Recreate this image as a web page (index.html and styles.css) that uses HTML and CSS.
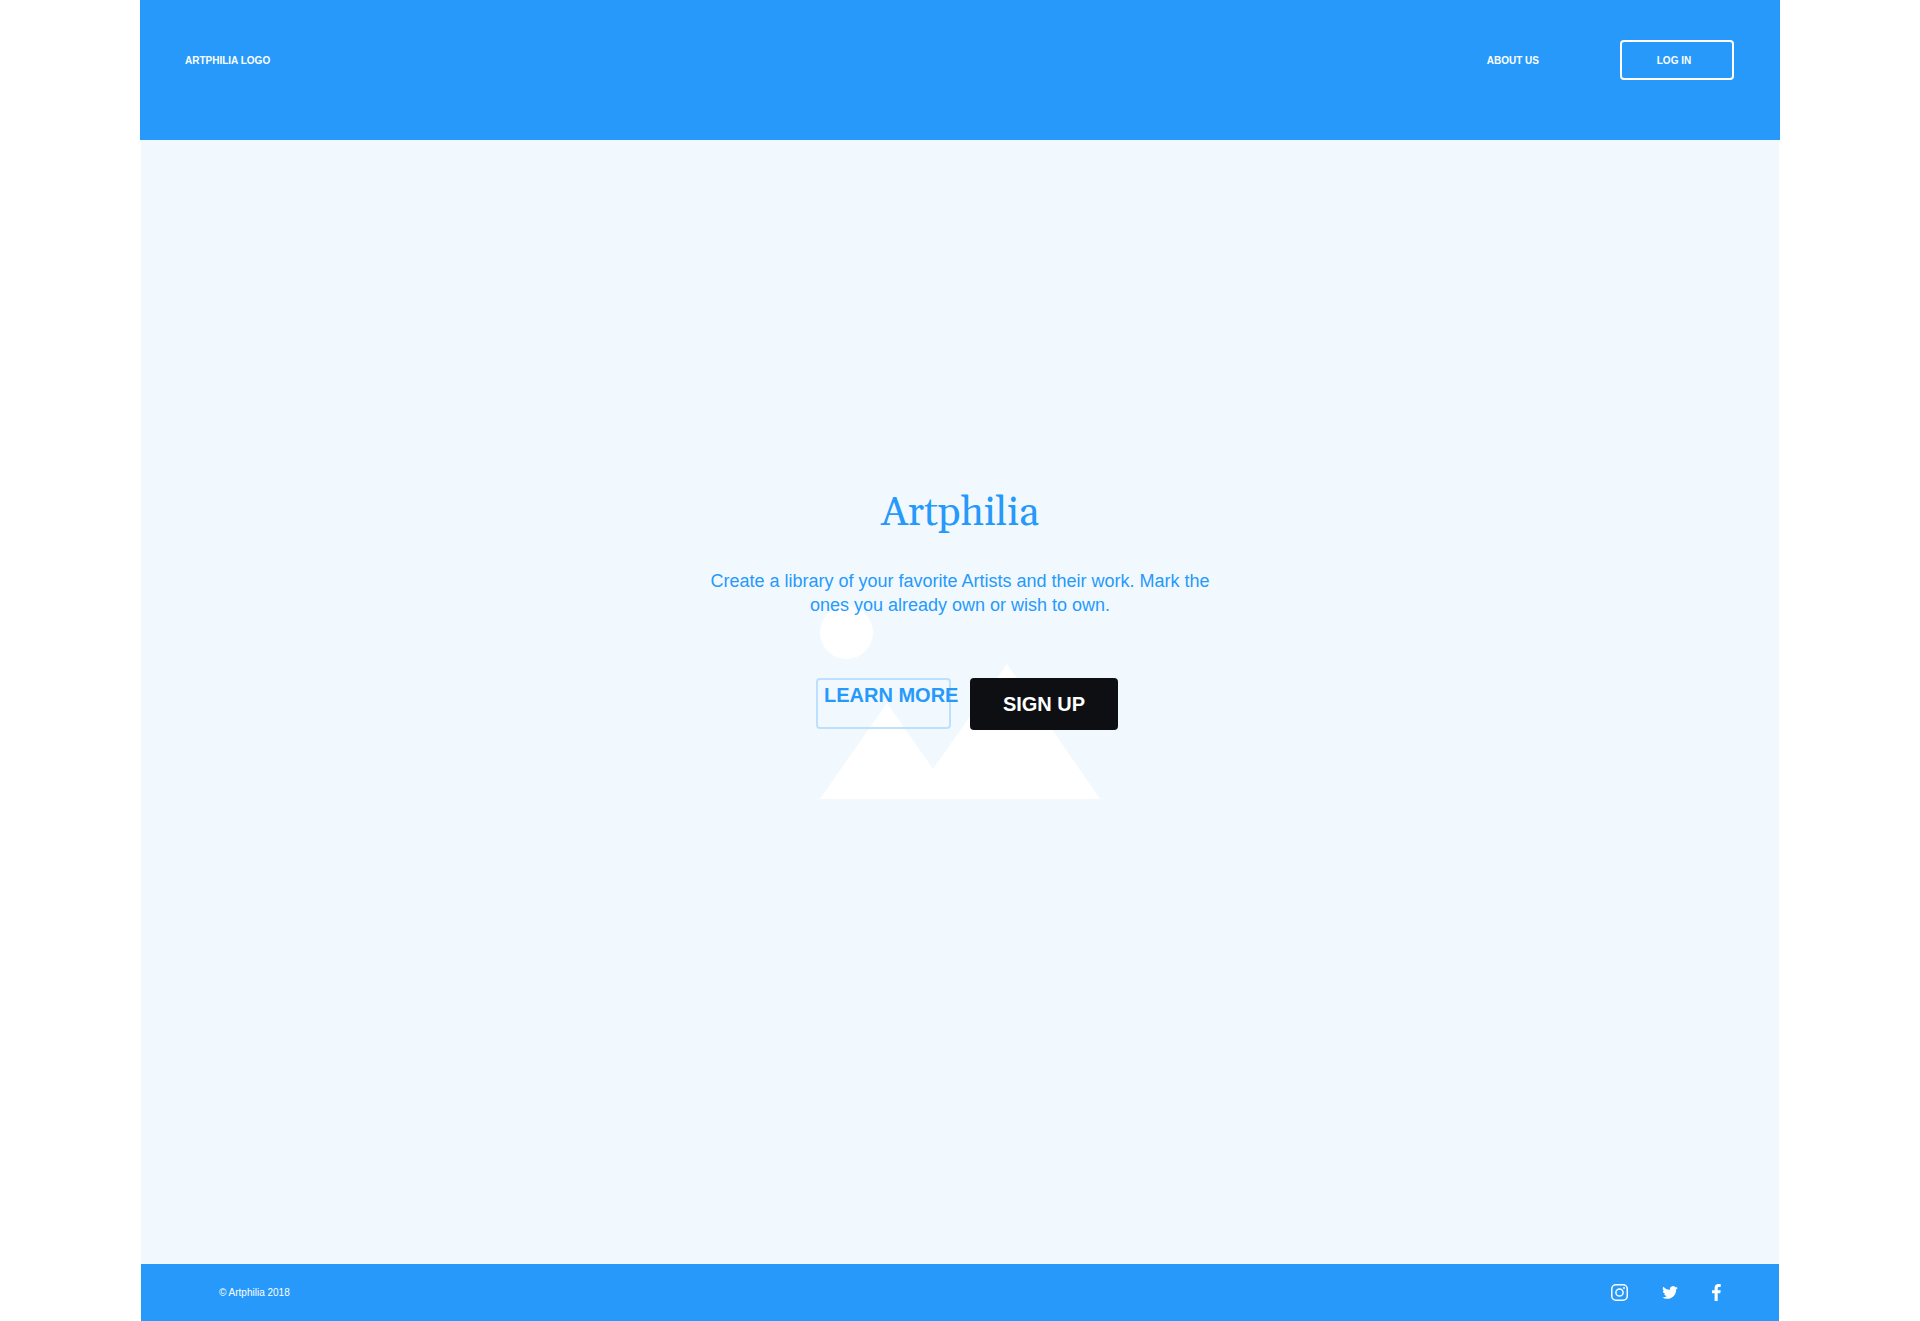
FILE: index.html
```html
<!DOCTYPE html>
<html lang="en">
<head>
<meta charset="utf-8">
<meta name="viewport" content="width=device-width, initial-scale=1">
<title>Artphilia</title>
<link rel="stylesheet" href="styles.css">
</head>
<body>
<div class="page">
  <header class="header">
    <a class="header-link" href="#">ARTPHILIA LOGO</a>
    <nav class="nav">
      <a class="header-link" href="#about">ABOUT US</a>
      <button class="login" type="button">LOG IN</button>
    </nav>
  </header>
  <main class="hero">
    <svg class="hero-image" viewBox="0 0 280 193" width="280" height="193" aria-hidden="true">
      <circle cx="26.5" cy="26.5" r="26.5"/>
      <path d="M0 193 67 97l46 66 74-105 93 135z"/>
    </svg>
    <div class="hero-content">
      <h1 class="title">Artphilia</h1>
      <p class="lead">Create a library of your favorite Artists and their work. Mark the ones you already own or wish to own.</p>
      <div class="actions">
        <button class="button button-outline" type="button">LEARN MORE</button>
        <button class="button button-solid" type="button">SIGN UP</button>
      </div>
    </div>
  </main>
  <footer class="footer">
    <small class="copyright">© Artphilia 2018</small>
    <nav class="social" aria-label="Social media">
      <a href="#instagram" aria-label="Instagram">
        <svg width="17" height="17" viewBox="0 0 17 17" fill="none" stroke="currentColor" stroke-width="1.5"><rect x=".75" y=".75" width="15.5" height="15.5" rx="4.2"/><circle cx="8.5" cy="8.5" r="3.6"/><circle cx="13" cy="4" r="1" fill="currentColor" stroke="none"/></svg>
      </a>
      <a href="#twitter" aria-label="Twitter">
        <svg width="16" height="13" viewBox="0 2 24 20" fill="currentColor"><path d="M24 4.56a9.8 9.8 0 0 1-2.83.77 4.93 4.93 0 0 0 2.17-2.72 9.9 9.9 0 0 1-3.13 1.2 4.92 4.92 0 0 0-8.38 4.48A13.98 13.98 0 0 1 1.67 3.15a4.93 4.93 0 0 0 1.52 6.57 4.9 4.9 0 0 1-2.23-.61v.06a4.93 4.93 0 0 0 3.95 4.83 4.9 4.9 0 0 1-2.22.08 4.93 4.93 0 0 0 4.6 3.42A9.88 9.88 0 0 1 0 19.54a13.94 13.94 0 0 0 7.55 2.21c9.05 0 14-7.5 14-14v-.63A10 10 0 0 0 24 4.56z"/></svg>
      </a>
      <a href="#facebook" aria-label="Facebook">
        <svg width="9" height="17" viewBox="0 0 9 17" fill="currentColor"><path d="M2.6 17V9.3H0V6.3h2.6V4.1C2.6 1.5 4.1 0 6.4 0 7.5 0 8.5.1 8.7.1v2.8H7.1C5.9 2.9 5.7 3.5 5.7 4.4v1.9h3l-.4 3H5.7V17z"/></svg>
      </a>
    </nav>
  </footer>
</div>
</body>
</html>
```
FILE: styles.css
```css
* {
  box-sizing: border-box;
}

body {
  margin: 0;
  background: #fff;
  color: #2699fb;
  font-family: "Liberation Sans", Arial, sans-serif;
}

button {
  margin: 0;
  font-family: inherit;
  cursor: pointer;
}

.page {
  display: flex;
  flex-direction: column;
  max-width: 1640px;
  min-height: 100vh;
  margin: 0 auto;
}

.header {
  display: flex;
  justify-content: space-between;
  align-items: flex-start;
  padding: 40px 46px 58px 45px;
  background: #2699fb;
}

.nav {
  display: flex;
  align-items: flex-start;
  gap: 81px;
}

.header-link {
  color: #fff;
  font-size: 10px;
  font-weight: bold;
  line-height: 42px;
  text-decoration: none;
}

.login {
  width: 114px;
  height: 40px;
  padding: 0 6px 0 0;
  border: 2px solid #fff;
  border-radius: 4px;
  background: transparent;
  color: #fff;
  font-size: 10px;
  font-weight: bold;
}

.hero {
  display: grid;
  flex: 1;
  place-items: center;
  margin: 0 1px;
  background: #f1f9ff;
}

.hero-image,
.hero-content {
  grid-area: 1 / 1;
}

.hero-image {
  fill: #fff;
}

.hero-content {
  display: flex;
  flex-direction: column;
  align-items: center;
  padding: 0 16px 184px;
  text-align: center;
}

.title {
  margin: 0 0 31px;
  font-family: Gelasio, Georgia, "Liberation Serif", serif;
  font-size: 40px;
  font-weight: normal;
  line-height: 48px;
}

.lead {
  max-width: 520px;
  margin: 0 0 61px;
  font-size: 18px;
  line-height: 24px;
}

.actions {
  display: flex;
  gap: 19px;
  padding-left: 14px;
}

.button {
  height: 52px;
  border-radius: 4px;
  font-size: 20px;
  font-weight: bold;
  line-height: 24px;
  white-space: nowrap;
}

.button-outline {
  display: flex;
  width: 135px;
  height: 51px;
  padding: 3px 6px;
  border: 2px solid #bce0fd;
  background: transparent;
  color: #2699fb;
}

.button-solid {
  width: 148px;
  padding: 0;
  border: 0;
  background: #0e0f12;
  color: #fff;
}

.footer {
  display: flex;
  justify-content: space-between;
  align-items: center;
  height: 57px;
  margin: 0 1px;
  padding: 0 58px 0 78px;
  background: #2699fb;
  color: #fff;
}

.copyright {
  font-size: 10px;
}

.social {
  display: flex;
  align-items: center;
  gap: 34px;
}

.social a {
  display: flex;
  color: #fff;
}
```
